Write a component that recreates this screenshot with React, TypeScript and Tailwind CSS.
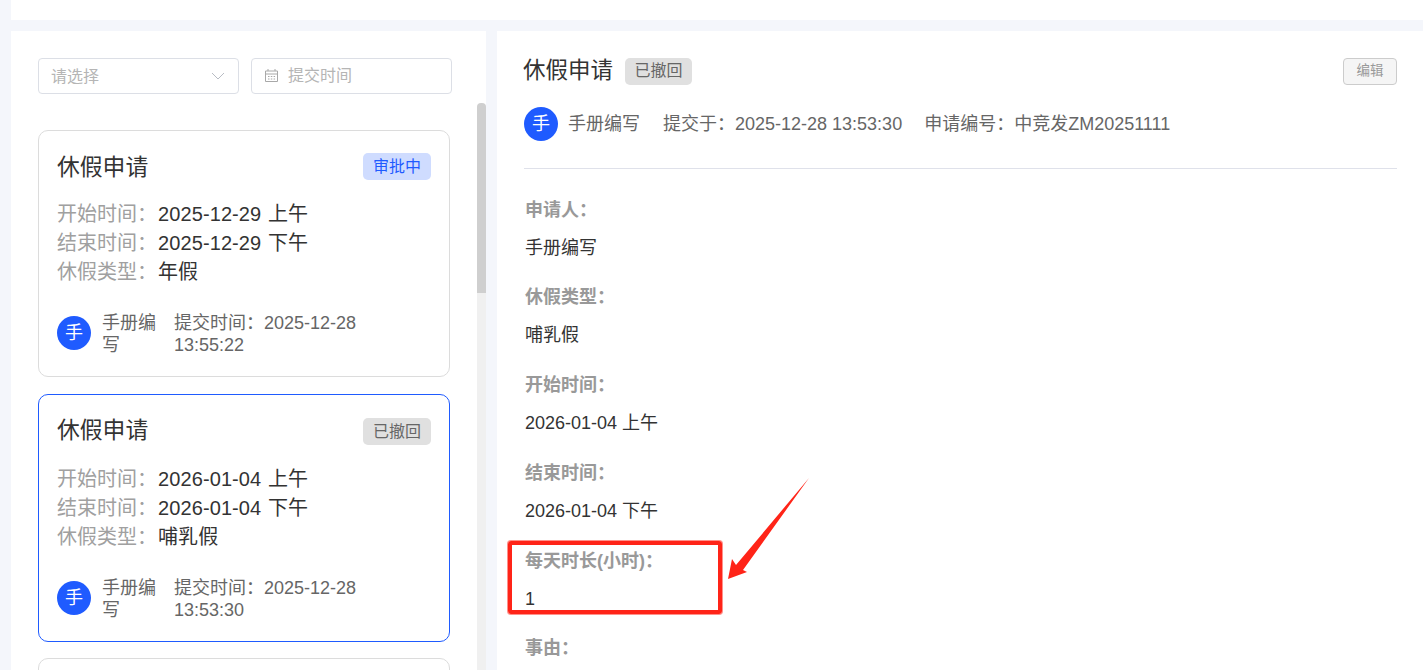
const font = 'font-["Liberation_Sans","Noto_Sans_CJK_SC",sans-serif]';

type CardProps = {
  active?: boolean;
  status: string;
  blue?: boolean;
  start: string;
  end: string;
  kind: string;
  time1: string;
  time2: string;
};

function Avatar() {
  return (
    <div className="w-[34px] h-[34px] shrink-0 rounded-full bg-[#1f5bff] text-white text-[18px] flex items-center justify-center">
      手
    </div>
  );
}

function Row({ label, value }: { label: string; value: string }) {
  return (
    <div className="flex h-[29px] items-center text-[20px]">
      <span className="text-[#a0a0a0] w-[101px] shrink-0">{label}</span>
      <span className="text-[#333333] tracking-[0.1px] [word-spacing:1px]">{value}</span>
    </div>
  );
}

function Card({ active, status, blue, start, end, kind, time1, time2 }: CardProps) {
  return (
    <div
      className={
        active
          ? "w-[412px] h-[248px] shrink-0 rounded-[10px] border border-[#1f5bff] bg-white px-[18px] pt-[23px]"
          : "w-[412px] h-[247px] shrink-0 rounded-[10px] border border-[#dcdcdc] bg-white px-[18px] pt-[22px]"
      }
    >
      <div className="flex items-center justify-between h-[27px]">
        <span className={active ? "text-[22.8px] text-[#333333] pb-[2px]" : "text-[22.8px] text-[#333333] pt-[2px]"}>休假申请</span>
        <span
          className={
            blue
              ? "w-[68px] h-[27px] rounded-[5px] bg-[#cfdcff] text-[#1f5bff] text-[16px] flex items-center justify-center"
              : "w-[68px] h-[27px] rounded-[5px] bg-[#e0e0e0] text-[#666666] text-[16px] flex items-center justify-center"
          }
        >
          {status}
        </span>
      </div>
      <div className="mt-[19px]">
        <Row label="开始时间：" value={start} />
        <Row label="结束时间：" value={end} />
        <Row label="休假类型：" value={kind} />
      </div>
      <div className="flex items-center mt-[24px] text-[18px] leading-[22px] text-[#666666]">
        <Avatar />
        <span className="w-[54px] ml-[11px] shrink-0 pt-[2px]">手册编写</span>
        <div className="ml-[18px] w-[200px] pt-[2px]">
          {time1}
          <br />
          {time2}
        </div>
      </div>
    </div>
  );
}

function Field({ label, value }: { label: string; value: string }) {
  return (
    <div className="h-[87.75px] pl-px">
      <div className="h-[24px] flex items-center text-[18px] font-bold text-[#999999]">{label}</div>
      <div className="h-[24px] mt-[14px] flex items-center text-[18px] text-[#333333]">{value}</div>
    </div>
  );
}

export default function App() {
  return (
    <div className={`${font} relative w-[1423px] h-[670px] overflow-hidden bg-[#f4f6fb] pl-[11px]`}>
      <div className="h-[20px] bg-white" />
      <div className="flex gap-[11px] mt-[11px] h-[639px]">
        <div className="w-[475px] shrink-0 bg-white flex overflow-hidden">
          <div className="w-[466px] shrink-0 pl-[27px] pt-[27px]">
            <div className="flex gap-[12px]">
              <div className="w-[201px] h-[36px] rounded-[4px] border border-[#dcdfe6] flex items-center justify-between pl-[13px] pr-[13px] text-[16px] text-[#b5b5b5]">
                <span className="pt-[2px] -ml-px">请选择</span>
                <svg width="14" height="8" viewBox="0 0 14 8" fill="none" stroke="#b8bcc4" strokeWidth="1">
                  <path d="M1 1l6 6 6-6" />
                </svg>
              </div>
              <div className="w-[201px] h-[36px] rounded-[4px] border border-[#dcdfe6] flex items-center pl-[12px] text-[16px] text-[#b5b5b5]">
                <svg width="15" height="15" viewBox="0 0 15 15" fill="none" stroke="#a8a8a8" strokeWidth="1" className="-mt-px">
                  <path d="M1.5 3h12v10.5h-12zM1.5 6h12M4 1v2M11 1v2" />
                  <path d="M4 8.5h1.5M6.8 8.5h1.5M9.6 8.5h1.5M4 11h1.5M6.8 11h1.5M9.6 11h1.5" />
                </svg>
                <span className="ml-[9px]">提交时间</span>
              </div>
            </div>
            <div className="flex flex-col gap-[17px] mt-[36px]">
              <Card status="审批中" blue start="2025-12-29 上午" end="2025-12-29 下午" kind="年假" time1="提交时间：2025-12-28" time2="13:55:22" />
              <Card active status="已撤回" start="2026-01-04 上午" end="2026-01-04 下午" kind="哺乳假" time1="提交时间：2025-12-28" time2="13:53:30" />
              <div className="w-[412px] h-[100px] shrink-0 -mt-px rounded-[10px] border border-[#dcdcdc] bg-white" />
            </div>
          </div>
          <div className="w-[9px] shrink-0 flex flex-col pt-[72px]">
            <div className="h-[190px] shrink-0 rounded-t-[4px] bg-[#cfcfcf]" />
            <div className="flex-1 bg-[#f0f0f0]" />
          </div>
        </div>
        <div className="flex-1 bg-white pl-[27px] pr-[26px] pt-[24px]">
          <div className="flex items-center justify-between h-[32px]">
            <div className="flex items-center">
              <span className="text-[22.5px] text-[#333333] -ml-px">休假申请</span>
              <span className="ml-[12px] w-[67px] h-[27px] rounded-[5px] bg-[#e0e0e0] text-[#666666] text-[16px] flex items-center justify-center">已撤回</span>
            </div>
            <button className="w-[54px] h-[27px] rounded-[4px] border border-[#cccccc] bg-[#f5f5f5] text-[#999999] text-[13.5px] flex items-center justify-center">编辑</button>
          </div>
          <div className="flex items-center mt-[20px] text-[18px] text-[#666666]">
            <Avatar />
            <span className="ml-[10px]">手册编写</span>
            <span className="ml-[23px]">提交于：2025-12-28 13:53:30</span>
            <span className="ml-[22px]">申请编号：中竞发ZM20251111</span>
          </div>
          <div className="h-px bg-[#dfe1ea] mt-[27px]" />
          <div className="mt-[29px]">
            <Field label="申请人：" value="手册编写" />
            <Field label="休假类型：" value="哺乳假" />
            <Field label="开始时间：" value="2026-01-04 上午" />
            <Field label="结束时间：" value="2026-01-04 下午" />
            <Field label="每天时长(小时)：" value="1" />
            <Field label="事由：" value="" />
          </div>
        </div>
      </div>
      <div className="absolute left-[508px] top-[541px] w-[214px] h-[73px] rounded-[3px] border-[4px] border-[#ff2418] ring-1 ring-[#ff2418]/50" />
      <svg className="absolute left-0 top-0 pointer-events-none" width="1423" height="670" viewBox="0 0 1423 670">
        <polygon points="809,478 736,565 732,559 728,579 747,572 743,570" fill="#ff2418" />
      </svg>
    </div>
  );
}
